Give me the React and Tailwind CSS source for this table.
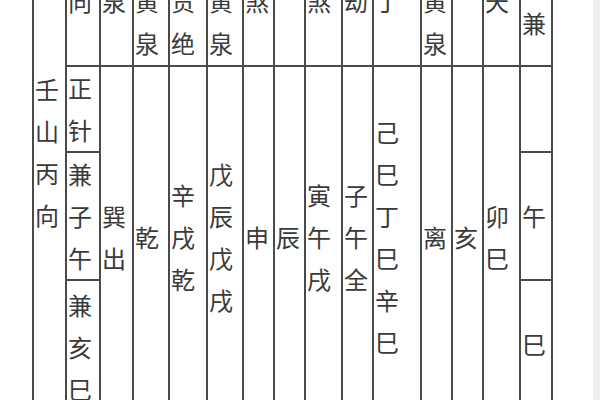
import React from "react";

const B = "border-[#4a4a4a]";

function Chars({ t }) {
  return (
    <div className="flex flex-col shrink-0">
      {[...t].map((c, i) => (
        <span key={i} className="block h-[42px] leading-[42px] shrink-0">
          {c}
        </span>
      ))}
    </div>
  );
}

function Head({ t, pb }) {
  return (
    <div className={`h-[67px] shrink-0 border-b-2 ${B} flex flex-col justify-end overflow-hidden pl-[1px] ${pb}`}>
      {t ? <Chars t={t} /> : null}
    </div>
  );
}

function Body({ t }) {
  return (
    <div className="flex-1 flex flex-col justify-center pl-[1px] overflow-hidden">
      <Chars t={t} />
    </div>
  );
}

function Col({ w, head, pb, body, last }) {
  return (
    <div className={`${w} shrink-0 h-full flex flex-col border-l-2 ${B} ${last ? "border-r-2" : ""}`}>
      <Head t={head} pb={pb} />
      {body}
    </div>
  );
}

function SubRows({ a, b, c, cTop }) {
  return (
    <div className="flex-1 flex flex-col">
      <div className={`h-[86px] shrink-0 border-b-2 ${B} flex flex-col justify-center pl-[1px]`}>
        {a ? <Chars t={a} /> : null}
      </div>
      <div className={`h-[128px] shrink-0 border-b-2 ${B} flex flex-col justify-center pl-[1px]`}>
        {b ? <Chars t={b} /> : null}
      </div>
      <div className={`flex-1 flex flex-col pl-[1px] ${cTop ? "justify-start pt-[3px]" : "justify-center"}`}>
        {c ? <Chars t={c} /> : null}
      </div>
    </div>
  );
}

export default function App() {
  return (
    <div
      className="w-[600px] h-[400px] bg-white overflow-hidden flex text-[24px] text-[#3a3a3a]"
      style={{ fontFamily: '"Noto Sans CJK SC", "Noto Sans", sans-serif' }}
    >
      <div className="w-[32px] shrink-0" />
      <div className="flex h-[407px] shrink-0">
        <div className={`w-[33px] shrink-0 h-full border-l-2 ${B} flex flex-col justify-start pt-[68px] pl-[1px]`}>
          <Chars t="壬山丙向" />
        </div>
        <Col w="w-[34px]" head="向" pb="pb-[43px]" body={<SubRows a="正针" b="兼子午" c="兼亥巳" cTop />} />
        <Col w="w-[33px]" head="泉" pb="pb-[43px]" body={<Body t="巽出" />} />
        <Col w="w-[36px]" head="黄泉" pb="pb-[1px]" body={<Body t="乾" />} />
        <Col w="w-[38px]" head="贯绝" pb="pb-[1px]" body={<Body t="辛戌乾" />} />
        <Col w="w-[36px]" head="黄泉" pb="pb-[1px]" body={<Body t="戊辰戊戌" />} />
        <Col w="w-[31px]" head="煞" pb="pb-[43px]" body={<Body t="申" />} />
        <Col w="w-[31px]" head="" pb="pb-[1px]" body={<Body t="辰" />} />
        <Col w="w-[37px]" head="煞" pb="pb-[43px]" body={<Body t="寅午戌" />} />
        <Col w="w-[31px]" head="劫" pb="pb-[43px]" body={<Body t="子午全" />} />
        <Col w="w-[48px]" head="丁" pb="pb-[43px]" body={<Body t="己巳丁巳辛巳" />} />
        <Col w="w-[31px]" head="黄泉" pb="pb-[1px]" body={<Body t="离" />} />
        <Col w="w-[31px]" head="" pb="pb-[1px]" body={<Body t="亥" />} />
        <Col w="w-[37px]" head="天" pb="pb-[43px]" body={<Body t="卯巳" />} />
        <Col w="w-[34px]" head="兼" pb="pb-[21px]" last body={<SubRows a="" b="午" c="巳" />} />
      </div>
      <div className="flex-1" />
      <div className="w-[7px] shrink-0 bg-[#efefef]" />
    </div>
  );
}
